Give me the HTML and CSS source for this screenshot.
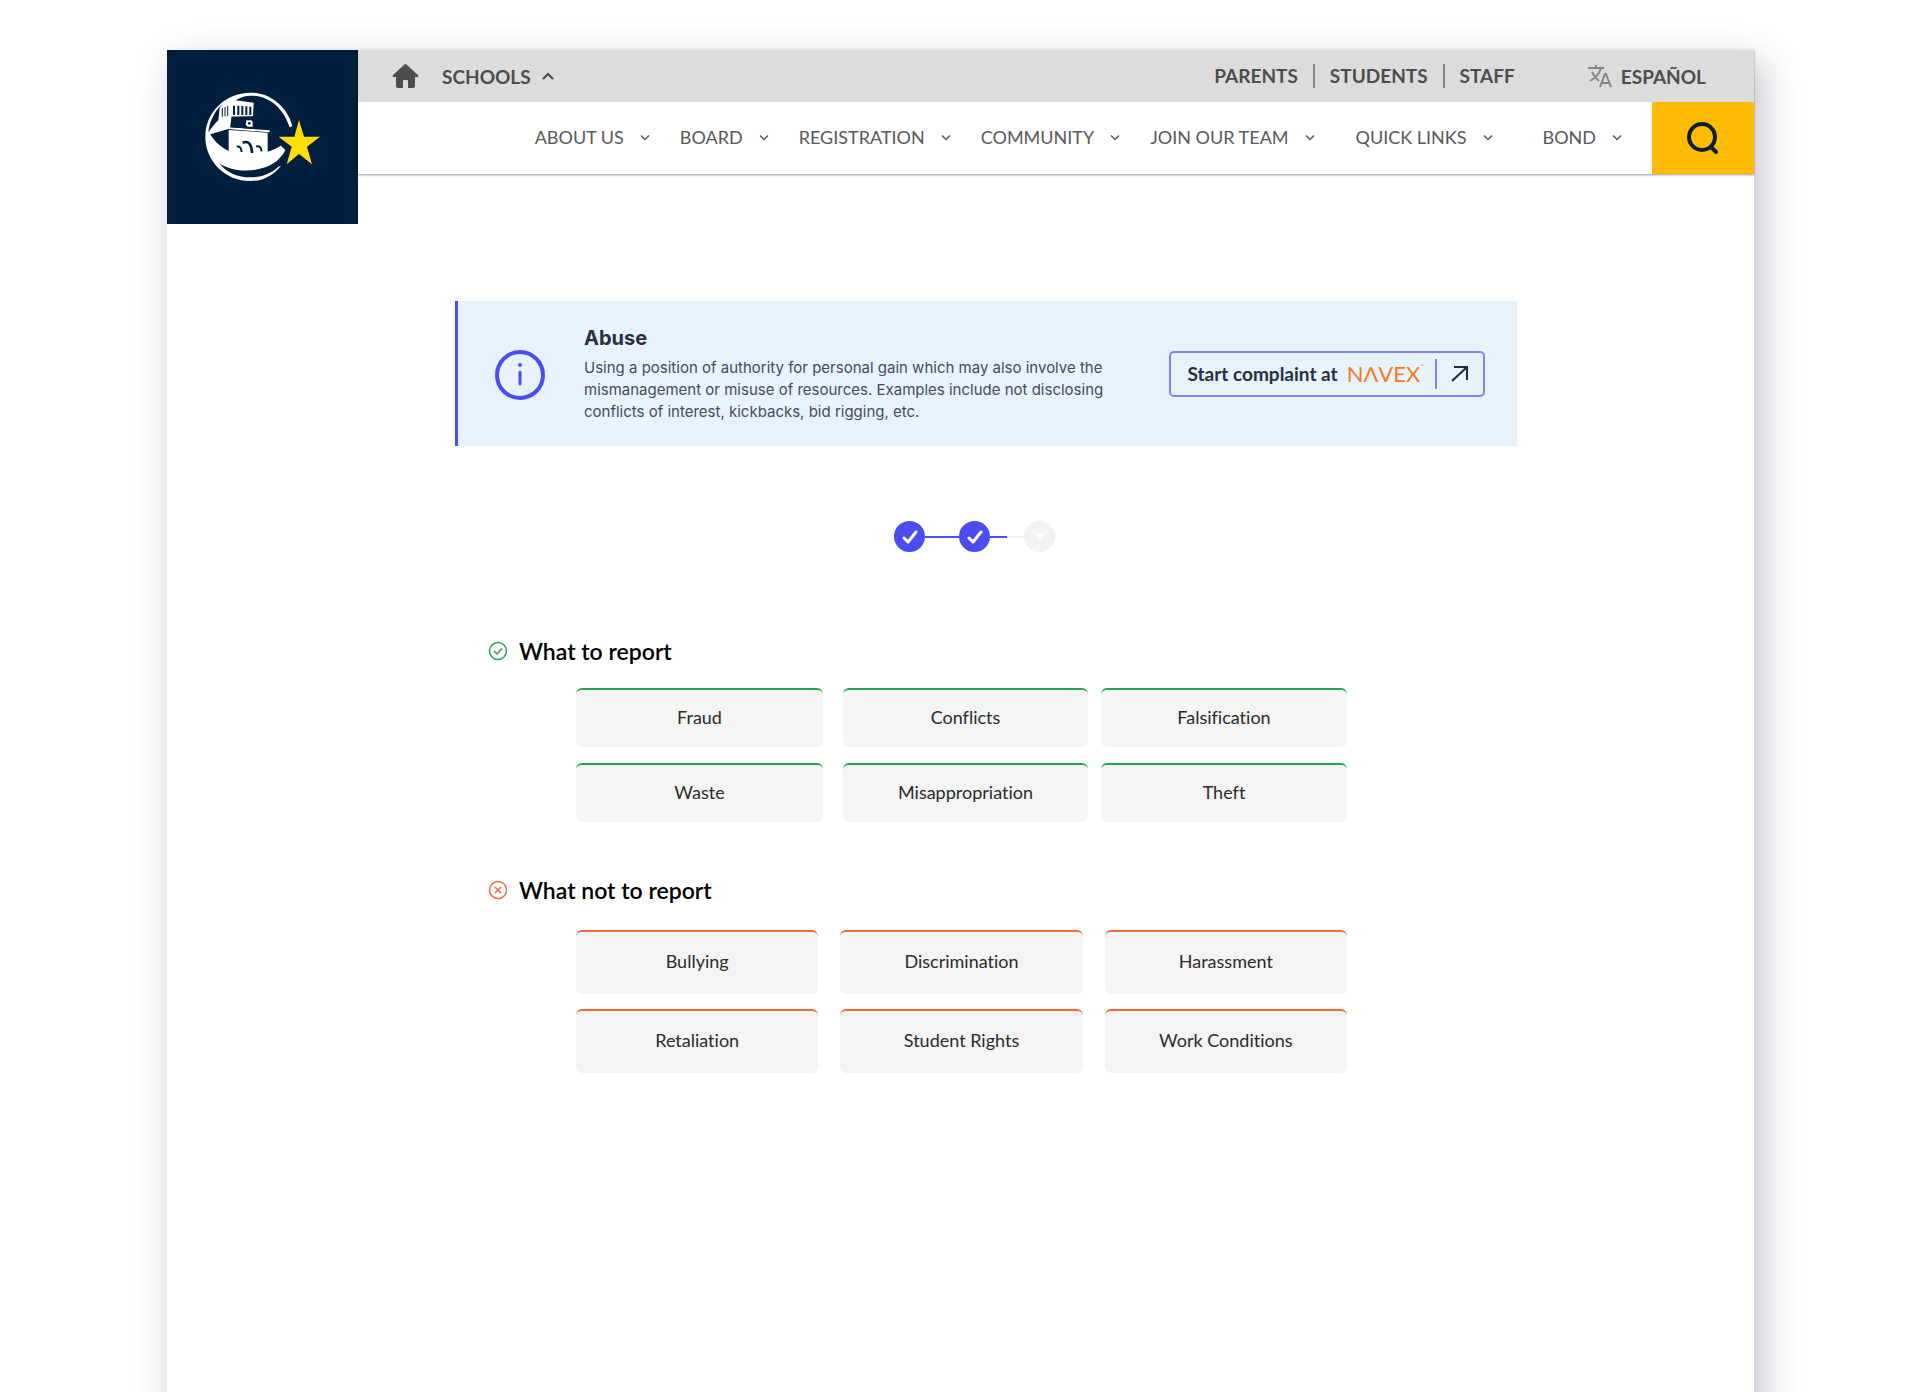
FILE: index.html
```html
<!DOCTYPE html>
<html lang="en">
<head>
    <meta charset="utf-8">
    <title>Report Abuse</title>
    <link rel="stylesheet" href="styles.css">
</head>
<body>
    <div class="stage">
    <div class="page">
        <header class="header">
            <a class="logo" href="#" aria-label="District home">
                <svg width="140" height="110" viewBox="8 6 420 330">
                    <!-- ring -->
                    <path d="M306 138C291 80 240 38 180 38C105 38 45 97 45 170C45 244 105 303 180 303C218 303 248 287 272 257L264 260C242 281 213 292 180 292C142 292 110 278 88 251C130 276 185 276 225 262C252 252 274 234 285 210L272 197C256 206 243 212 232 215V158L115 150V213C92 202 73 186 60 163L114 147L238 157V151L120 142L124 110L188 109L190 68L136 61C149 52 164 47 182 47C236 47 280 84 298 142Z" fill="#fff"/>
                    <path d="M54 157C57 126 72 93 97 71L88 84L84 121C73 132 62 145 54 157Z" fill="#001e3d"/>
                    <!-- belfry openings -->
                    <path d="M96 84V110M104 81V109M112 78V108" stroke="#001e3d" stroke-width="3"/>
                    <path d="M131 77V105M144 77V105M156 78V105M168 79V105M180 80V105" stroke="#001e3d" stroke-width="6"/>
                    <path d="M124 110H190V147L120 142Z" fill="#001e3d"/>
                    <path d="M168 121H183L187 126V140H172L166 134Z" fill="#fff"/>
                    <circle cx="177" cy="130" r="4" fill="#001e3d"/>
                    <!-- arches -->
                    <path d="M139 200Q152 196 154 216M197 200Q211 194 214 214" fill="none" stroke="#001e3d" stroke-width="6"/>
                    <path d="M157 188Q183 178 185 219" fill="none" stroke="#001e3d" stroke-width="8"/>
                    <path d="M326 120L341 170H389L350 200L365 253L326 222L289 253L304 200L265 170H312Z" fill="#ffdd00"/>
                </svg>
            </a>
            <div class="bars">
                <div class="topbar">
                    <a class="home" href="#" aria-label="Home">
                        <svg width="27" height="24" viewBox="0 0 27 24"><path d="M13 0Q14 0 15 1L26 11Q27 13 25 13H23V22Q23 24 21 24H16V17Q16 16 15 16H12Q11 16 11 17V24H6Q4 24 4 22V13H2Q0 13 1 11L12 1Q13 0 13 0Z" fill="#4d4d4d"/></svg>
                    </a>
                    <button class="schools" type="button">SCHOOLS
                        <svg width="12" height="8" viewBox="0 0 12 8"><path d="M1 7L6 2L11 7" fill="none" stroke="#4d4d4d" stroke-width="2"/></svg>
                    </button>
                    <nav class="audience">
                        <a href="#">PARENTS</a>
                        <a href="#">STUDENTS</a>
                        <a href="#">STAFF</a>
                    </nav>
                    <a class="language" href="#">
                        <svg width="24" height="24" viewBox="0 0 24 24" fill="none" stroke="#858585" stroke-width="2"><path d="M0 4H16M8 1V4M13 4Q11 12 2 17M4 8Q7 14 11 17M12 23L17 10H18L23 23M14 19H21"/></svg>
                        ESPAÑOL
                    </a>
                </div>
                <div class="mainbar">
                    <nav class="menu">
                        <button type="button">ABOUT US <svg class="chev" viewBox="0 0 20 14"><path d="M2 3L10 11L18 3"/></svg></button>
                        <button type="button">BOARD <svg class="chev" viewBox="0 0 20 14"><path d="M2 3L10 11L18 3"/></svg></button>
                        <button type="button">REGISTRATION <svg class="chev" viewBox="0 0 20 14"><path d="M2 3L10 11L18 3"/></svg></button>
                        <button type="button">COMMUNITY <svg class="chev" viewBox="0 0 20 14"><path d="M2 3L10 11L18 3"/></svg></button>
                        <button type="button">JOIN OUR TEAM <svg class="chev" viewBox="0 0 20 14"><path d="M2 3L10 11L18 3"/></svg></button>
                        <button type="button" class="wide">QUICK LINKS <svg class="chev" viewBox="0 0 20 14"><path d="M2 3L10 11L18 3"/></svg></button>
                        <button type="button" class="wider">BOND <svg class="chev" viewBox="0 0 20 14"><path d="M2 3L10 11L18 3"/></svg></button>
                    </nav>
                    <button class="search" type="button" aria-label="Search">
                        <svg width="34" height="34" viewBox="0 0 34 34" fill="none" stroke="#0b1f36" stroke-width="4" stroke-linecap="round"><circle cx="16" cy="16" r="13"/><path d="M25 26L30 31"/></svg>
                    </button>
                </div>
            </div>
        </header>

        <main class="content">
            <section class="notice">
                <svg class="notice-icon" width="52" height="52" viewBox="0 0 52 52"><circle cx="26" cy="27" r="23" fill="none" stroke="#4b4df0" stroke-width="4"/><circle cx="26" cy="17" r="2" fill="#4b4df0"/><path d="M26 24V36" stroke="#4b4df0" stroke-width="3" stroke-linecap="round"/></svg>
                <div class="notice-text">
                    <h1>Abuse</h1>
                    <p>Using a position of authority for personal gain which may also involve the mismanagement or misuse of resources. Examples include not disclosing conflicts of interest, kickbacks, bid rigging, etc.</p>
                </div>
                <a class="complaint" href="#" aria-label="Start complaint at NAVEX">
                    <span>Start complaint at</span>
                    <span class="navex">NΛVEX<sup>™</sup></span>
                    <span class="go">
                        <svg width="17" height="16" viewBox="0 0 17 16" fill="none" stroke="#1f2a3c" stroke-width="2"><path d="M1 15L15 2M3 1H16V14"/></svg>
                    </span>
                </a>
            </section>

            <div class="stepper">
                <span class="step done"><svg width="16" height="14" viewBox="0 0 16 14"><path d="M2 8L6 12L14 2"/></svg></span>
                <span class="line full"></span>
                <span class="step done"><svg width="16" height="14" viewBox="0 0 16 14"><path d="M2 8L6 12L14 2"/></svg></span>
                <span class="line half"></span>
                <span class="step"></span>
            </div>

            <section class="group report">
                <h2>
                    <svg width="20" height="20" viewBox="0 0 40 40" fill="none" stroke="#2b9f52" stroke-width="3"><circle cx="20" cy="20" r="17"/><path d="M12 20L18 26L28 15"/></svg>
                    What to report
                </h2>
                <ul class="cards">
                    <li>Fraud</li>
                    <li>Conflicts</li>
                    <li>Falsification</li>
                    <li>Waste</li>
                    <li>Misappropriation</li>
                    <li>Theft</li>
                </ul>
            </section>

            <section class="group no-report">
                <h2>
                    <svg width="20" height="20" viewBox="0 0 40 40" fill="none" stroke="#ee6a3a" stroke-width="3"><circle cx="20" cy="20" r="17"/><path d="M14 14L26 26M26 14L14 26"/></svg>
                    What not to report
                </h2>
                <ul class="cards">
                    <li>Bullying</li>
                    <li>Discrimination</li>
                    <li>Harassment</li>
                    <li>Retaliation</li>
                    <li>Student Rights</li>
                    <li>Work Conditions</li>
                </ul>
            </section>
        </main>
    </div>
    </div>
</body>
</html>
```
FILE: styles.css
```css
* {
    box-sizing: border-box;
}
body {
    margin: 0;
    font-family: Lato, sans-serif;
    background: #fff;
    color: #2b2b2b;
}
a {
    color: inherit;
    text-decoration: none;
}
button {
    font: inherit;
    color: inherit;
    background: none;
    border: 0;
    padding: 0;
    cursor: pointer;
}
svg {
    flex: none;
    display: block;
}
.stage {
    display: flex;
    min-height: 100vh;
    padding: 50px 166px 0 167px;
    overflow: clip;
}
.page {
    flex: 1;
    margin-bottom: -60px;
    background: #fff;
    box-shadow: 8px 12px 36px rgba(25, 35, 65, 0.28);
}

/* header */
.header {
    display: flex;
    align-items: flex-start;
}
.logo {
    display: flex;
    align-items: center;
    justify-content: center;
    width: 191px;
    height: 174px;
    background: #001e3d;
}
.bars {
    flex: 1;
    box-shadow: 0 1px 2px rgba(0, 0, 0, 0.4);
}
.topbar {
    display: flex;
    align-items: center;
    height: 52px;
    padding: 0 48px 0 34px;
    background: #dcdcdc;
    color: #4d4d4d;
    font-size: 19px;
    font-weight: 700;
}
.schools {
    display: flex;
    align-items: center;
    gap: 11px;
    margin-left: 23px;
}
.audience {
    display: flex;
    margin-left: auto;
}
.audience a {
    line-height: 24px;
}
.audience a + a {
    margin-left: 15px;
    padding-left: 15px;
    border-left: 2px solid #858585;
}
.language {
    display: flex;
    align-items: center;
    gap: 9px;
    margin-left: 73px;
}
.mainbar {
    display: flex;
    height: 72px;
    background: #fff;
}
.menu {
    display: flex;
    flex: 1;
    justify-content: flex-end;
    gap: 30px;
    padding: 0 30px 2px 0;
    color: #595959;
    font-size: 18px;
}
.menu button {
    display: flex;
    align-items: center;
    gap: 16px;
}
.menu .wide {
    margin-left: 11px;
}
.menu .wider {
    margin-left: 20px;
}
.chev {
    width: 10px;
    height: 7px;
    fill: none;
    stroke: #595959;
    stroke-width: 3;
}
.search {
    display: flex;
    align-items: center;
    justify-content: center;
    width: 102px;
    background: #ffbb00;
}

/* content */
.content {
    padding: 77px 237px 0 288px;
}
.notice {
    display: flex;
    align-items: center;
    min-height: 145px;
    padding: 0 32px 0 36px;
    border-left: 3px solid #4b4df0;
    background: #e8f2fc;
}
.notice-text {
    flex: 1;
    margin-left: 38px;
    font-family: Inter, sans-serif;
}
.notice-text h1 {
    margin: 0 0 6px;
    font-size: 20px;
    line-height: 26px;
    font-weight: 700;
    color: #263040;
}
.notice-text p {
    margin: 0;
    max-width: 540px;
    font-size: 15px;
    line-height: 22px;
    color: #434d5b;
}
.complaint {
    display: flex;
    align-items: center;
    height: 46px;
    padding: 0 15px 0 17px;
    border: 2px solid #8284ea;
    border-radius: 5px;
    color: #263040;
    font-size: 19px;
    font-weight: 700;
}
.navex {
    display: flex;
    margin-left: 9px;
    font-size: 22px;
    font-weight: 400;
    color: #f47b20;
}
.navex sup {
    font-size: 5px;
    line-height: 12px;
}
.go {
    display: flex;
    align-items: center;
    height: 30px;
    margin-left: 11px;
    padding-left: 14px;
    border-left: 2px solid #8284ea;
}

/* progress */
.stepper {
    display: flex;
    align-items: center;
    justify-content: center;
    margin: 75px 23px 0 0;
}
.step {
    display: flex;
    align-items: center;
    justify-content: center;
    width: 31px;
    height: 31px;
    border-radius: 50%;
    background: #f3f3f3;
}
.step:last-child::after {
    content: "";
    width: 6px;
    height: 6px;
    border-radius: 50%;
    background: #fff;
}
.done {
    background: #4b4df0;
}
.done svg {
    fill: none;
    stroke: #fff;
    stroke-width: 3;
    stroke-linecap: round;
    stroke-linejoin: round;
}
.line {
    width: 34px;
    height: 2px;
    background: #4b4df0;
}
.half {
    background: linear-gradient(to right, #4b4df0 50%, #eeeeee 50%);
}

/* report lists */
.group {
    padding: 0 170px 0 33px;
}
.group h2 {
    display: flex;
    align-items: center;
    gap: 11px;
    margin: 0;
    font-size: 23px;
    line-height: 28px;
    font-weight: 600;
    color: #000;
}
.cards {
    display: grid;
    margin: 0 0 0 88px;
    padding: 0;
    list-style: none;
    font-variant-ligatures: none;
}
.cards li {
    display: flex;
    align-items: center;
    justify-content: center;
    padding-bottom: 4px;
    border-top: 2px solid #2b9f52;
    border-radius: 6px;
    background: #f4f4f4;
    font-size: 18px;
}
.report {
    margin-top: 85px;
}
.report .cards {
    grid-template-columns: 254fr 245fr 246fr;
    grid-auto-rows: 59px;
    gap: 16px 13px;
    margin-top: 23px;
}
.report li:nth-child(3n+1) {
    margin-right: 7px;
}
.no-report {
    margin-top: 54px;
}
.no-report .cards {
    grid-template-columns: repeat(3, 1fr);
    grid-auto-rows: 64px;
    gap: 15px 22px;
    margin-top: 26px;
}
.no-report li {
    border-top-color: #ee6a3a;
}
```
